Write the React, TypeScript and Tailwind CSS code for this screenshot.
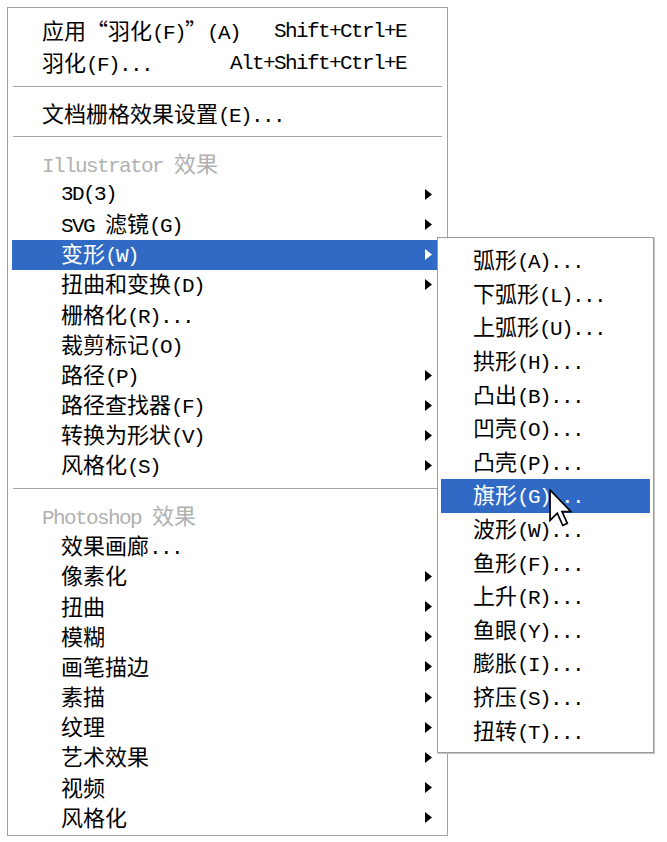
import React from 'react'

type Item = {
  label: string
  kind?: 'item' | 'header' | 'sep'
  sub?: boolean
  shortcut?: string
  active?: boolean
  indent?: boolean
}

const CJK = /([\u3000-\u303f\u4e00-\u9fff\uff00-\uffef“”]+)/

// SimSun-like look: full-width CJK at 22px, tall half-width latin in a mono face
function T({ text }: { text: string }) {
  const parts = text.split(CJK).filter(p => p !== '')
  return (
    <span className="whitespace-pre leading-[24px]">
      {parts.map((p, i) =>
        CJK.test(p) ? (
          <span key={i} className="font-['Noto_Sans_CJK_SC',sans-serif] text-[22px]">{p}</span>
        ) : (
          <span key={i} className="font-['Liberation_Mono','Noto_Sans_CJK_SC',monospace] text-[21px] tracking-[-1.6px]">{p}</span>
        )
      )}
    </span>
  )
}

function Arrow({ white }: { white?: boolean }) {
  return (
    <svg width="7" height="11" viewBox="0 0 7 11" className="shrink-0">
      <polygon points="0,0 7,5.5 0,11" fill={white ? '#ffffff' : '#000000'} />
    </svg>
  )
}

const mainItems: Item[] = [
  { label: '应用“羽化(F)”(A)', shortcut: 'Shift+Ctrl+E' },
  { label: '羽化(F)...', shortcut: 'Alt+Shift+Ctrl+E' },
  { label: '', kind: 'sep' },
  { label: '文档栅格效果设置(E)...' },
  { label: '', kind: 'sep' },
  { label: 'Illustrator 效果', kind: 'header' },
  { label: '3D(3)', indent: true, sub: true },
  { label: 'SVG 滤镜(G)', indent: true, sub: true },
  { label: '变形(W)', indent: true, sub: true, active: true },
  { label: '扭曲和变换(D)', indent: true, sub: true },
  { label: '栅格化(R)...', indent: true },
  { label: '裁剪标记(O)', indent: true },
  { label: '路径(P)', indent: true, sub: true },
  { label: '路径查找器(F)', indent: true, sub: true },
  { label: '转换为形状(V)', indent: true, sub: true },
  { label: '风格化(S)', indent: true, sub: true },
  { label: '', kind: 'sep' },
  { label: 'Photoshop 效果', kind: 'header' },
  { label: '效果画廊...', indent: true },
  { label: '像素化', indent: true, sub: true },
  { label: '扭曲', indent: true, sub: true },
  { label: '模糊', indent: true, sub: true },
  { label: '画笔描边', indent: true, sub: true },
  { label: '素描', indent: true, sub: true },
  { label: '纹理', indent: true, sub: true },
  { label: '艺术效果', indent: true, sub: true },
  { label: '视频', indent: true, sub: true },
  { label: '风格化', indent: true, sub: true },
]

const warpItems = [
  '弧形(A)...', '下弧形(L)...', '上弧形(U)...', '拱形(H)...', '凸出(B)...',
  '凹壳(O)...', '凸壳(P)...', '旗形(G)...', '波形(W)...', '鱼形(F)...',
  '上升(R)...', '鱼眼(Y)...', '膨胀(I)...', '挤压(S)...', '扭转(T)...',
]

function MainRow({ item, top }: { item: Item; top: boolean }) {
  if (item.kind === 'sep') {
    return (
      <div className="pt-[7px] pb-[12px] px-[5px]">
        <div className="h-px bg-[#a8a8a8]" />
      </div>
    )
  }
  if (item.kind === 'header') {
    return (
      <div className="h-[30px] flex items-center pl-[34px] text-[#b0b0b0]">
        <T text={item.label} />
      </div>
    )
  }
  return (
    <div
      className={`${top ? 'h-[32px]' : 'h-[30.2px]'} mx-[4px] flex items-center ${
        item.indent ? 'pl-[49px]' : 'pl-[30px]'
      } ${item.active ? 'bg-[#316ac5] text-white' : 'text-black'} ${item.sub ? 'pr-[11px]' : 'pr-[37px]'}`}
    >
      <div className="flex-1">
        <T text={item.label} />
      </div>
      {item.shortcut && <T text={item.shortcut} />}
      {item.sub && <Arrow white={item.active} />}
    </div>
  )
}

export default function App() {
  return (
    <div className="relative w-[667px] h-[842px] bg-white overflow-hidden">
      <div className="ml-[7px] mt-[7px] w-[441px] h-[829px] border border-[#a0a0a0] bg-white pt-[7px]">
        {mainItems.map((it, i) => (
          <MainRow key={i} item={it} top={i < 2} />
        ))}
      </div>

      {/* 变形 submenu */}
      <div className="absolute left-[437px] top-[237px] w-[217px] h-[516px] border border-[#9a9a9a] shadow-[1px_1px_0_#c4c4c4] bg-white pt-[6px]">
        {warpItems.map((label, i) => (
          <div
            key={i}
            className={`h-[33.6px] mx-[3px] pl-[32px] flex items-center ${
              i === 7 ? 'bg-[#316ac5] text-white' : 'text-black'
            }`}
          >
            <T text={label} />
          </div>
        ))}
      </div>

      {/* mouse pointer */}
      <svg
        width="23"
        height="38"
        viewBox="0 0 12 20"
        className="absolute left-[549px] top-[489px]"
      >
        <path
          d="M0.5 0.5 L0.5 16.5 L4.3 12.7 L7.2 19.2 L9.6 18.1 L6.8 11.9 L11.5 11.9 Z"
          fill="#ffffff"
          stroke="#000000"
          strokeWidth="0.9"
          strokeLinejoin="miter"
        />
      </svg>
    </div>
  )
}
